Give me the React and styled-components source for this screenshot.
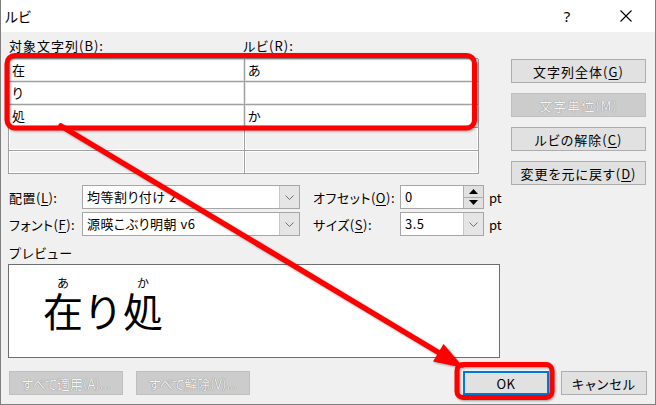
import React from 'react';
import styled, { createGlobalStyle } from 'styled-components';

const GlobalStyle = createGlobalStyle`
  html, body {
    margin: 0;
    padding: 0;
    background: #1e1e1e;
  }
  * {
    box-sizing: border-box;
  }
`;

const uiFont = `"Noto Sans CJK JP", "Noto Sans", sans-serif`;

const Window = styled.div`
  position: relative;
  width: 656px;
  height: 405px;
  display: flex;
  flex-direction: column;
  background: #f0f0f0;
  border: 1px solid #7f7f7f;
  border-top: 0;
  font-family: ${uiFont};
  font-size: 13px;
  font-feature-settings: "palt";
  letter-spacing: 1px;
  color: #000;
  overflow: hidden;
`;

const TitleBar = styled.div`
  height: 32px;
  flex: none;
  display: flex;
  align-items: center;
  background: #fff;
  padding: 0 6px 0 4px;
`;

const Title = styled.div`
  flex: 1;
  font-size: 14px;
  letter-spacing: 0;
`;

const TitleButton = styled.div`
  width: 46px;
  height: 32px;
  display: flex;
  align-items: center;
  justify-content: center;
  font-family: "Noto Sans", sans-serif;
  font-size: 15px;
  letter-spacing: 0;
  margin-left: ${p => p.gap || 0}px;
`;

const Body = styled.div`
  flex: 1;
  display: flex;
  flex-direction: column;
  padding: 6px 8px 0 7px;
`;

const Main = styled.div`
  display: grid;
  grid-template-columns: 492px 135px;
  column-gap: 11px;
`;

const LeftColumn = styled.div`
  display: flex;
  flex-direction: column;
`;

const LabelRow = styled.div`
  display: grid;
  grid-template-columns: 234px 1fr;
  height: 16px;
  line-height: 16px;
  padding-left: 1px;
  margin-bottom: 4px;
`;

const Label = styled.span`
  line-height: 16px;
  white-space: nowrap;
`;

const Key = styled.span`
  text-decoration: underline;
  text-underline-offset: 2px;
`;

const Table = styled.div`
  width: 470px;
  display: grid;
  grid-template-columns: 236px 234px;
  grid-auto-rows: 23px;
  border-top: 1px solid #a0a0a0;
  border-left: 1px solid #a0a0a0;
`;

const Cell = styled.div`
  background: ${p => (p.filled ? '#fff' : '#f0f0f0')};
  border-right: 1px solid #a0a0a0;
  border-bottom: 1px solid #a0a0a0;
  box-shadow: inset 0 0 0 1px ${p => (p.filled ? '#e6e6e6' : '#fff')};
  padding: 0 3px;
  line-height: 22px;
  letter-spacing: 0;
`;

const FormGrid = styled.div`
  display: grid;
  grid-template-columns: 74px 218px 100px 84px auto;
  grid-auto-rows: 24px;
  row-gap: 3px;
  margin-top: 11px;
  align-items: center;
`;

const FieldLabel = styled.span`
  padding-left: 1px;
  white-space: nowrap;
  margin-left: ${p => p.indent || 0}px;
  letter-spacing: 0.5px;
`;

const Combo = styled.div`
  height: 24px;
  display: flex;
  align-items: stretch;
  background: #fff;
  border: 1px solid #a6a6a6;
`;

const ComboText = styled.div`
  flex: 1;
  padding-left: 4px;
  line-height: 22px;
  letter-spacing: 0.5px;
  white-space: nowrap;
  overflow: hidden;
`;

const DropButton = styled.div`
  width: 20px;
  display: flex;
  align-items: center;
  justify-content: center;
  background: #e5e5e5;
  border-left: 1px solid #c8c8c8;
`;

const Spin = styled.div`
  width: 20px;
  display: flex;
  flex-direction: column;
  background: #e1e1e1;
  border-left: 1px solid #adadad;
`;

const SpinHalf = styled.div`
  flex: 1;
  display: flex;
  align-items: center;
  justify-content: center;
  border-bottom: ${p => (p.top ? '1px solid #adadad' : '0')};
`;

const Unit = styled.span`
  padding-left: 5px;
  letter-spacing: 0;
`;

const PreviewLabel = styled.div`
  margin-top: 9px;
  height: 16px;
  line-height: 16px;
  padding-left: 1px;
`;

const PreviewBox = styled.div`
  margin-top: 3px;
  height: 94px;
  background: #fff;
  border: 1px solid #6e6e6e;
  padding: 12px 0 0 34px;
  display: flex;
  align-items: flex-start;
  letter-spacing: 0;
  font-feature-settings: normal;
`;

const PreviewLine = styled.div`
  display: flex;
  align-items: flex-end;
`;

const RubyGroup = styled.div`
  display: flex;
  flex-direction: column;
  align-items: center;
`;

const RubyText = styled.span`
  height: 13px;
  font-size: 12px;
  line-height: 12px;
`;

const BaseText = styled.span`
  font-size: 40px;
  line-height: 40px;
  height: 40px;
`;

const RightColumn = styled.div`
  display: flex;
  flex-direction: column;
  gap: 10px;
  padding-top: 21px;
`;

const Button = styled.div`
  height: 24px;
  width: ${p => p.w || 135}px;
  display: flex;
  align-items: center;
  justify-content: center;
  white-space: nowrap;
  background: ${p => (p.disabled ? '#cccccc' : '#e1e1e1')};
  border: ${p => (p.primary ? '2px solid #0078d7' : p.disabled ? '1px solid #bfbfbf' : '1px solid #adadad')};
  color: ${p => (p.disabled ? '#f5f5f5' : '#000')};
  text-shadow: ${p => (p.disabled ? '0 0 1px #6f6f6f, 0 0 0.5px #8f8f8f' : 'none')};
  letter-spacing: ${p => (p.tight ? '0' : p.primary ? '0.5px' : '1px')};
`;

const BottomRow = styled.div`
  margin-top: 13px;
  display: flex;
  align-items: center;
  padding-left: 1px;
`;

const Gap = styled.div`
  flex: ${p => (p.w ? 'none' : 1)};
  width: ${p => p.w || 0}px;
`;

const Overlay = styled.svg`
  position: absolute;
  left: 0;
  top: 0;
  pointer-events: none;
  filter: drop-shadow(1px 1px 1.2px rgba(0, 0, 0, 0.35));
`;

const Chevron = () => (
  <svg width="9" height="5" viewBox="0 0 9 5">
    <path d="M0.5 0.5 L4.5 4.5 L8.5 0.5" fill="none" stroke="#707070" strokeWidth="1" />
  </svg>
);

const Close = () => (
  <svg width="12" height="12" viewBox="0 0 12 12">
    <path d="M0.5 0.5 L11.5 11.5 M11.5 0.5 L0.5 11.5" stroke="#000" strokeWidth="1.1" />
  </svg>
);

const rows = [
  ['在', 'あ', true],
  ['り', '', true],
  ['処', 'か', true],
  ['', '', false],
  ['', '', false],
];

const preview = [
  ['在', 'あ'],
  ['り', ''],
  ['処', 'か'],
];

export default function App() {
  return (
    <>
      <GlobalStyle />
      <Window>
        <TitleBar>
          <Title>ルビ</Title>
          <TitleButton>?</TitleButton>
          <TitleButton gap={13}><Close /></TitleButton>
        </TitleBar>
        <Body>
          <Main>
            <LeftColumn>
              <LabelRow>
                <Label>対象文字列(B):</Label>
                <Label>ルビ(R):</Label>
              </LabelRow>
              <Table>
                {rows.map(([base, ruby, filled], i) => (
                  <React.Fragment key={i}>
                    <Cell filled={filled}>{base}</Cell>
                    <Cell filled={filled}>{ruby}</Cell>
                  </React.Fragment>
                ))}
              </Table>
              <FormGrid>
                <FieldLabel>配置(<Key>L</Key>):</FieldLabel>
                <Combo>
                  <ComboText>均等割り付け 2</ComboText>
                  <DropButton><Chevron /></DropButton>
                </Combo>
                <FieldLabel indent={12}>オフセット(<Key>O</Key>):</FieldLabel>
                <Combo>
                  <ComboText>0</ComboText>
                  <Spin>
                    <SpinHalf top>
                      <svg width="9" height="5" viewBox="0 0 9 5"><path d="M0 5 L4.5 0 L9 5 Z" fill="#000" /></svg>
                    </SpinHalf>
                    <SpinHalf>
                      <svg width="9" height="5" viewBox="0 0 9 5"><path d="M0 0 L4.5 5 L9 0 Z" fill="#000" /></svg>
                    </SpinHalf>
                  </Spin>
                </Combo>
                <Unit>pt</Unit>

                <FieldLabel>フォント(<Key>F</Key>):</FieldLabel>
                <Combo>
                  <ComboText>源暎こぶり明朝 v6</ComboText>
                  <DropButton><Chevron /></DropButton>
                </Combo>
                <FieldLabel indent={12}>サイズ(<Key>S</Key>):</FieldLabel>
                <Combo>
                  <ComboText>3.5</ComboText>
                  <DropButton><Chevron /></DropButton>
                </Combo>
                <Unit>pt</Unit>
              </FormGrid>
              <PreviewLabel>プレビュー</PreviewLabel>
              <PreviewBox>
                <PreviewLine>
                  {preview.map(([base, ruby], i) => (
                    <RubyGroup key={i}>
                      <RubyText>{ruby}</RubyText>
                      <BaseText>{base}</BaseText>
                    </RubyGroup>
                  ))}
                </PreviewLine>
              </PreviewBox>
            </LeftColumn>
            <RightColumn>
              <Button>文字列全体(<Key>G</Key>)</Button>
              <Button disabled>文字単位(M)</Button>
              <Button>ルビの解除(<Key>C</Key>)</Button>
              <Button>変更を元に戻す(<Key>D</Key>)</Button>
            </RightColumn>
          </Main>
          <BottomRow>
            <Button w={114} disabled tight>すべて適用(A)...</Button>
            <Gap w={13} />
            <Button w={114} disabled tight>すべて解除(V)...</Button>
            <Gap />
            <Button w={86} primary>OK</Button>
            <Gap w={12} />
            <Button w={86}>キャンセル</Button>
          </BottomRow>
        </Body>
        <Overlay width="656" height="405" viewBox="0 0 656 405">
          <rect x="6" y="55.5" width="467.5" height="72.5" rx="8" fill="none" stroke="#ff0000" strokeWidth="5" />
          <line x1="60" y1="126" x2="440" y2="354" stroke="#ff0000" strokeWidth="5.5" strokeLinecap="round" />
          <polygon points="463,368 432,361.5 442.5,344" fill="#ff0000" />
          <rect x="456" y="364.5" width="95" height="33" rx="6" fill="none" stroke="#ff0000" strokeWidth="5" />
        </Overlay>
      </Window>
    </>
  );
}
